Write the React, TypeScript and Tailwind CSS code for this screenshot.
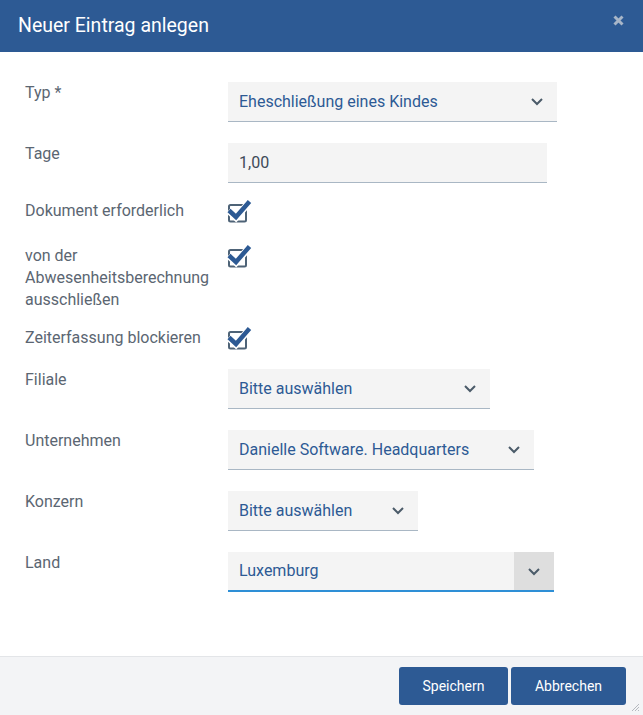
import React from 'react';

// Dialog „Neuer Eintrag anlegen“ mit Formularzeilen und Fußleiste.
const font = { fontFamily: 'Roboto, "Liberation Sans", Arial, sans-serif' };

function Chevron() {
  return (
    <svg width="14" height="9" viewBox="0 0 14 9" fill="none">
      <path d="M2 2l5 5 5-5" stroke="#4b5b69" strokeWidth="2" />
    </svg>
  );
}

function Select({ value, width, active }: { value: string; width: number; active?: boolean }) {
  return (
    <div
      className={`flex h-10 items-center bg-[#f4f4f4] ${active ? 'border-b-2 border-[#2e8fd6]' : 'border-b border-[#a9b7c4]'}`}
      style={{ width }}
    >
      <span className="flex-1 truncate pl-[11px] text-[16px] text-[#2d5a94]">{value}</span>
      {active ? (
        <span className="flex h-full w-10 items-center justify-center bg-[#dedede]">
          <Chevron />
        </span>
      ) : (
        <span className="flex w-10 items-center justify-center">
          <Chevron />
        </span>
      )}
    </div>
  );
}

function Check() {
  return (
    <svg width="26" height="23" viewBox="0 0 26 23" className="-ml-[2px] shrink-0" fill="none">
      <rect x="3" y="5" width="17" height="16.5" rx="1.5" stroke="#4e6377" strokeWidth="2" />
      <path d="M2.5 10.5l7.5 7 14-16" stroke="#ffffff" strokeWidth="7" />
      <path d="M3 10.5l7 6.5 13.5-15.5" stroke="#2d5a94" strokeWidth="4.5" />
    </svg>
  );
}

function Row({ label, children, className = '' }: { label: React.ReactNode; children: React.ReactNode; className?: string }) {
  return (
    <div className={`flex ${className}`}>
      <div className="w-[203px] shrink-0 pr-2 text-[16px] leading-[22px] text-[#5b6672]">{label}</div>
      {children}
    </div>
  );
}

export default function App() {
  return (
    <div className="flex h-[715px] w-[643px] flex-col bg-white" style={font}>
      <header className="flex h-[52px] shrink-0 items-center justify-between bg-[#2d5a94] pl-[18px] pr-[18px]">
        <h1 className="text-[19.5px] text-white">Neuer Eintrag anlegen</h1>
        <svg width="11" height="11" viewBox="0 0 11 11" className="-mt-[11px] mr-[1px]">
          <path d="M1.5 1.5l8 8M9.5 1.5l-8 8" stroke="#a8b6c8" strokeWidth="3" />
        </svg>
      </header>

      <main className="flex-1 pl-[25px] pt-[30px]">
        <Row label="Typ *">
          <Select value="Eheschließung eines Kindes" width={329} />
        </Row>
        <Row label="Tage" className="mt-[21px]">
          <div className="flex h-10 w-[319px] items-center border-b border-[#a9b7c4] bg-[#f4f4f4] pl-[11px] text-[16px] text-[#3d4a58]">1,00</div>
        </Row>
        <Row label="Dokument erforderlich" className="mt-[17px]">
          <Check />
        </Row>
        <Row label={<>von der<br />Abwesenheitsberechnung<br />ausschließen</>} className="mt-[22px]">
          <Check />
        </Row>
        <Row label="Zeiterfassung blockieren" className="mt-[16px]">
          <Check />
        </Row>
        <Row label="Filiale" className="mt-[19px]">
          <Select value="Bitte auswählen" width={262} />
        </Row>
        <Row label="Unternehmen" className="mt-[21px]">
          <Select value="Danielle Software. Headquarters" width={306} />
        </Row>
        <Row label="Konzern" className="mt-[21px]">
          <Select value="Bitte auswählen" width={190} />
        </Row>
        <Row label="Land" className="mt-[21px]">
          <Select value="Luxemburg" width={326} active />
        </Row>
      </main>

      <footer className="relative flex h-[59px] shrink-0 items-start justify-end gap-[3px] border-t border-[#e3e5e8] bg-[#f3f4f6] pr-[17px] pt-[10px]">
        <button className="h-[38px] w-[109px] rounded-[3px] bg-[#2d5a94] text-[14px] text-white">Speichern</button>
        <button className="h-[38px] w-[115px] rounded-[3px] bg-[#2d5a94] text-[14px] text-white">Abbrechen</button>
        <svg width="10" height="10" viewBox="0 0 10 10" className="absolute bottom-[3px] right-[3px]">
          <path d="M9 2L2 9M9 5L5 9M9 8L8 9" stroke="#b5b9bf" strokeWidth="1" />
        </svg>
      </footer>
    </div>
  );
}
